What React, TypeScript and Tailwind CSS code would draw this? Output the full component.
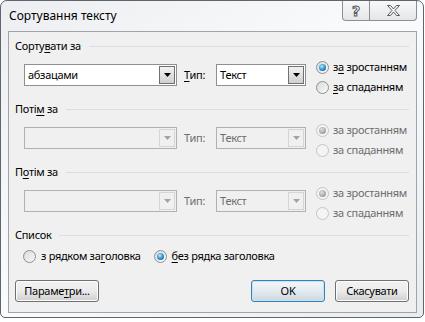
import React from "react";

const Mn = ({ children }: { children: React.ReactNode }) => (
  <span className="underline underline-offset-[2px] decoration-1">{children}</span>
);

interface RadioProps {
  checked?: boolean;
  disabled?: boolean;
}

const Radio = ({ checked = false, disabled = false }: RadioProps) => (
  <span
    className={`flex size-[13px] shrink-0 items-center justify-center rounded-full border ${
      disabled
        ? "border-[#c5c5c5] bg-[#f4f4f4]"
        : "border-[#8e8f8f] bg-gradient-to-br from-[#d9d9d9] to-[#fbfbfb]"
    }`}
  >
    {checked && (
      <span
        className={`size-[7px] rounded-full ${
          disabled
            ? "bg-[radial-gradient(circle_at_40%_35%,#e0e0e0,#9e9e9e_70%)]"
            : "bg-[radial-gradient(circle_at_40%_35%,#b8ecff,#2a8ccc_55%,#0d4f83)]"
        }`}
      />
    )}
  </span>
);

interface ComboProps {
  width: string;
  value?: string;
  disabled?: boolean;
}

const Combo = ({ width, value = "", disabled = false }: ComboProps) => (
  <div
    className={`flex h-[22px] items-stretch border ${width} ${
      disabled ? "border-[#adb2b5] bg-[#f0f0f0]" : "border-[#8e8f8f] bg-white"
    }`}
  >
    <span
      className={`flex-1 whitespace-nowrap pl-[3px] leading-[20px] ${
        disabled ? "text-[#6d6d6d]" : "text-black"
      }`}
    >
      {value}
    </span>
    <span
      className={`m-px flex w-[16px] items-center justify-center border ${
        disabled
          ? "border-[#d5d5d5] bg-[#f0f0f0]"
          : "border-[#707070] bg-gradient-to-b from-[#f2f2f2] to-[#cfcfcf]"
      }`}
    >
      <svg width="7" height="4" viewBox="0 0 7 4">
        <path d="M0 0h7L3.5 4z" fill={disabled ? "#a3a3a3" : "#000"} />
      </svg>
    </span>
  </div>
);

const SectionHeader = ({ children }: { children: React.ReactNode }) => (
  <div className="flex h-[16px] items-center pl-[6px] pr-[7px]">
    <span className="whitespace-nowrap leading-[16px]">{children}</span>
    <span className="ml-[8px] h-px flex-1 bg-[#d5dfe5]" />
  </div>
);

interface SortRowProps {
  value?: string;
  disabled?: boolean;
  label?: React.ReactNode;
  asc?: React.ReactNode;
  desc?: React.ReactNode;
}

const SortRow = ({ value, disabled = false, label, asc, desc }: SortRowProps) => {
  const muted = disabled ? "text-[#6d6d6d]" : "text-black";
  return (
    <div className="flex h-[47px] items-start pl-[15px]">
      <div className="mt-[10px] flex items-center">
        <Combo width="w-[153px]" value={value} disabled={disabled} />
        <span className={`w-[39px] whitespace-nowrap pl-[7px] ${muted}`}>{label}</span>
        <Combo width="w-[90px]" value="Текст" disabled={disabled} />
      </div>
      <div className="ml-[10px] mt-[3px] flex flex-col">
        <label className="flex h-[20px] items-center gap-[4px] whitespace-nowrap">
          <Radio checked disabled={disabled} />
          <span className={muted}>{asc}</span>
        </label>
        <label className="flex h-[20px] items-center gap-[4px] whitespace-nowrap">
          <Radio disabled={disabled} />
          <span className={muted}>{desc}</span>
        </label>
      </div>
    </div>
  );
};

const DialogButton = ({
  children,
  width,
  primary = false,
}: {
  children: React.ReactNode;
  width: string;
  primary?: boolean;
}) => (
  <button
    className={`h-[22px] whitespace-nowrap rounded-[3px] border bg-gradient-to-b ${width} ${
      primary
        ? "border-[#3c7fb1] from-[#f1f6f9] via-[#e4ebf0] to-[#cdd7de] shadow-[inset_0_0_0_1px_#bfe6fa]"
        : "border-[#707070] from-[#f2f2f2] via-[#ebebeb] to-[#cfcfcf] shadow-[inset_0_0_0_1px_#fcfcfc]"
    } text-black leading-[20px]`}
  >
    {children}
  </button>
);

export default function App() {
  return (
    <div className="h-[322px] w-[425px] bg-white font-['Noto_Sans',sans-serif] text-[11px] tracking-[-0.3px] text-black">
      <div className="flex h-[318px] w-[424px] flex-col rounded-t-[7px] rounded-b-[5px] border border-[#5f656b] bg-gradient-to-br from-[#eceef1] via-[#fafbfc] to-[#e9ecef]">
        <div className="flex h-[30px] items-start justify-between">
          <span className="pl-[8px] pt-[7px] text-[12px] leading-[16px] tracking-normal">
            Сортування тексту
          </span>
          <div className="mr-[6px] flex">
            <span className="flex h-[20px] w-[28px] items-center justify-center rounded-bl-[4px] border border-t-0 border-[#8b9097] bg-gradient-to-b from-[#f7f8f9] to-[#e4e7ea]">
              <span className="font-['DejaVu_Sans',sans-serif] text-[14px] font-bold leading-none text-[#fbfbfb] [-webkit-text-stroke:1px_#555a60]">
                ?
              </span>
            </span>
            <span className="flex h-[20px] w-[47px] items-center justify-center rounded-br-[4px] border border-l-0 border-t-0 border-[#8b9097] bg-gradient-to-b from-[#f7f8f9] to-[#e4e7ea]">
              <svg width="13" height="11" viewBox="0 0 13 11">
                <path
                  d="M0.5 0.5h3l3 3.5 3-3.5h3l-4.5 5 4.5 5h-3l-3-3.5-3 3.5h-3l4.5-5z"
                  fill="#fafafa"
                  stroke="#555a60"
                  strokeWidth="1"
                  strokeLinejoin="round"
                />
              </svg>
            </span>
          </div>
        </div>
        <div className="ml-[7px] flex h-[282px] w-[409px] flex-col border border-[#a0a4a8] bg-[#f0f0f0] pt-[6px]">
          <SectionHeader>
            Сорту<Mn>в</Mn>ати за
          </SectionHeader>
          <SortRow
            value="абзацами"
            label={
              <>
                <Mn>Т</Mn>ип:
              </>
            }
            asc={
              <>
                з<Mn>а</Mn> зростанням
              </>
            }
            desc={
              <>
                <Mn>з</Mn>а спаданням
              </>
            }
          />
          <SectionHeader>
            Поті<Mn>м</Mn> за
          </SectionHeader>
          <SortRow disabled label="Тип:" asc="за зростанням" desc="за спаданням" />
          <SectionHeader>
            П<Mn>о</Mn>тім за
          </SectionHeader>
          <SortRow disabled label="Тип:" asc="за зростанням" desc="за спаданням" />
          <SectionHeader>Список</SectionHeader>
          <div className="mt-[3px] flex h-[20px] items-center whitespace-nowrap pl-[14px]">
            <label className="flex items-center gap-[5px]">
              <Radio />
              <span>
                з рядком за<Mn>г</Mn>оловка
              </span>
            </label>
            <label className="ml-[13px] flex items-center gap-[5px]">
              <Radio checked />
              <span>
                <Mn>б</Mn>ез рядка заголовка
              </span>
            </label>
          </div>
          <div className="mt-[14px] flex items-center pl-[6px] pr-[7px]">
            <DialogButton width="w-[84px]">
              Параме<Mn>т</Mn>ри...
            </DialogButton>
            <div className="ml-auto flex gap-[10px]">
              <DialogButton width="w-[74px]" primary>
                OK
              </DialogButton>
              <DialogButton width="w-[74px]">Скасувати</DialogButton>
            </div>
          </div>
        </div>
      </div>
    </div>
  );
}
